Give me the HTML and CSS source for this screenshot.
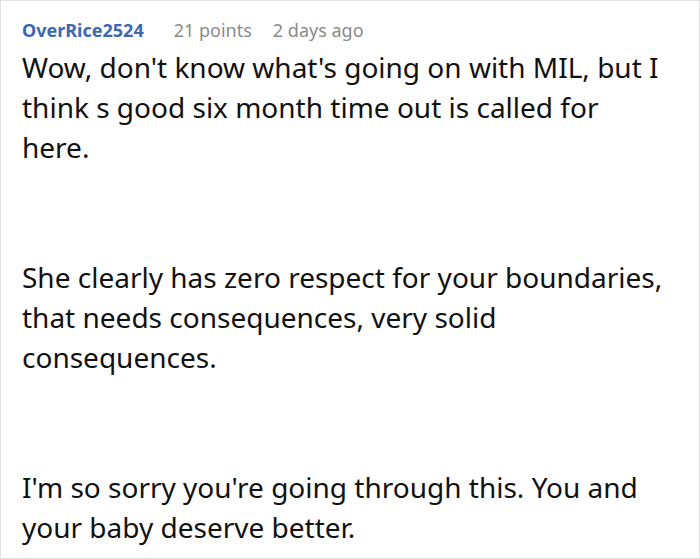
FILE: index.html
```html
<!DOCTYPE html>
<html>
<head>
<meta charset="utf-8">
<link rel="stylesheet" href="styles.css">
</head>
<body>
<div class="comment">
  <div class="meta">
    <span class="author">OverRice2524</span>
    <span class="points">21 points</span>
    <span class="date">2 days ago</span>
  </div>
  <div class="text">
    <p>Wow, don't know what's going on with MIL, but I think s good six month time out is called for here.</p>
    <p>She clearly has zero respect for your boundaries, that needs consequences, very solid consequences.</p>
    <p>I'm so sorry you're going through this. You and your baby deserve better.</p>
  </div>
</div>
</body>
</html>
```
FILE: styles.css
```css
html, body {
  margin: 0;
  padding: 0;
  background: #fff;
}
.comment {
  box-sizing: border-box;
  width: 700px;
  height: 559px;
  border: 1px solid #e2e2e2;
  padding: 17px 34px 0 21px;
  font-family: "Noto Sans", "Open Sans", sans-serif;
  overflow: hidden;
}
.meta {
  display: flex;
  font-size: 18px;
  line-height: 24px;
  color: #8a8a8a;
}
.author {
  color: #3b68b3;
  font-weight: 700;
  margin-right: 30px;
}
.points {
  margin-right: 21px;
}
.text {
  margin-top: 5px;
  font-size: 28px;
  line-height: 40px;
  color: #111;
}
.text p {
  margin: 0 0 90px 0;
}
```
